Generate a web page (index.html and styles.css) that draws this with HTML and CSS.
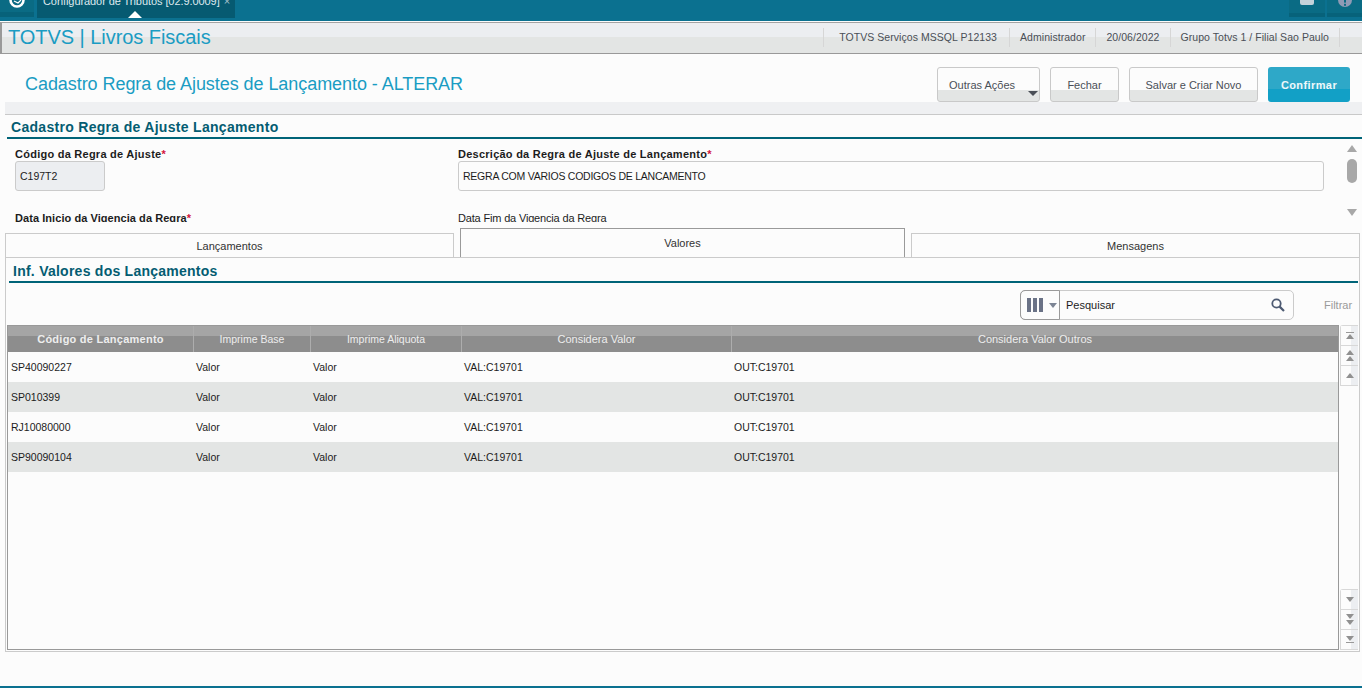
FILE: index.html
```html
<!DOCTYPE html>
<html lang="pt">
<head>
<meta charset="utf-8">
<title>TOTVS | Livros Fiscais</title>
<link rel="stylesheet" href="styles.css">
</head>
<body>
<div class="app">
  <header class="topbar">
    <div class="logo-cell">
      <svg class="logo" width="20" height="12" viewBox="0 0 20 12"><circle cx="10" cy="0" r="6.5" fill="none" stroke="#fff" stroke-width="2.6"/><path d="M7 1 L11 3 L14 0" fill="none" stroke="#fff" stroke-width="1.2"/></svg>
    </div>
    <div class="app-tab">
      <span class="app-tab-text">Configurador de Tributos [02.9.0009]</span>
      <span class="app-tab-x">×</span>
      <span class="app-tab-caret"></span>
    </div>
    <div class="top-spacer"></div>
    <div class="top-btn top-btn-first">
      <svg width="14" height="5" viewBox="0 0 14 5"><path d="M0 0h14v3a2 2 0 0 1-2 2H2a2 2 0 0 1-2-2z" fill="#c4d2da"/></svg>
    </div>
    <div class="top-btn">
      <svg width="14" height="7" viewBox="0 0 14 7"><path d="M0 0h14a7 7 0 0 1-14 0z" fill="#8f9ab5"/><rect x="6" y="0" width="2" height="2.6" fill="#0a6b84"/><rect x="6" y="3.8" width="2" height="2" fill="#0a6b84"/></svg>
    </div>
  </header>

  <div class="sysbar">
    <div class="sysbar-title">TOTVS | Livros Fiscais</div>
    <div class="sysbar-info">
      <span class="info-item">TOTVS Serviços MSSQL P12133</span>
      <span class="info-item">Administrador</span>
      <span class="info-item">20/06/2022</span>
      <span class="info-item">Grupo Totvs 1 / Filial Sao Paulo</span>
    </div>
  </div>

  <div class="page-head">
    <h1 class="page-title">Cadastro Regra de Ajustes de Lançamento - ALTERAR</h1>
    <div class="actions">
      <button class="btn btn-more">Outras Ações<span class="btn-caret"></span></button>
      <button class="btn btn-close">Fechar</button>
      <button class="btn btn-save">Salvar e Criar Novo</button>
      <button class="btn btn-primary">Confirmar</button>
    </div>
  </div>

  <section class="form-section">
    <h2 class="section-title">Cadastro Regra de Ajuste Lançamento</h2>
    <div class="form-body">
      <div class="form-fields">
        <div class="form-row">
          <div class="field field-code">
            <label class="label">Código da Regra de Ajuste<span class="req">*</span></label>
            <div class="input input-disabled">C197T2</div>
          </div>
          <div class="field field-desc">
            <label class="label">Descrição da Regra de Ajuste de Lançamento<span class="req">*</span></label>
            <div class="input input-desc">REGRA COM VARIOS CODIGOS DE LANCAMENTO</div>
          </div>
        </div>
        <div class="form-row form-row-second">
          <div class="field field-code">
            <label class="label label-tight">Data Inicio da Vigencia da Regra<span class="req">*</span></label>
          </div>
          <div class="field field-desc">
            <label class="label label-plain">Data Fim da Vigencia da Regra</label>
          </div>
        </div>
      </div>
      <div class="form-scroll">
        <span class="tri tri-up"></span>
        <span class="form-thumb"></span>
        <span class="tri tri-down"></span>
      </div>
    </div>
  </section>

  <nav class="tabs">
    <div class="tab">Lançamentos</div>
    <div class="tab tab-active">Valores</div>
    <div class="tab">Mensagens</div>
  </nav>

  <section class="panel">
    <h2 class="panel-title">Inf. Valores dos Lançamentos</h2>
    <div class="toolbar">
      <div class="search">
        <div class="search-cols">
          <svg width="16" height="14" viewBox="0 0 16 14"><path d="M0 0h4v14H0zM6 0h4v14H6zM12 0h4v14h-4z" fill="#6a7286"/></svg>
          <span class="search-caret"></span>
        </div>
        <div class="search-text">Pesquisar</div>
        <svg class="search-icon" width="14" height="14" viewBox="0 0 14 14"><circle cx="5.5" cy="5.5" r="4.2" fill="none" stroke="#4d5a72" stroke-width="1.8"/><path d="M8.6 8.6 13 13" stroke="#4d5a72" stroke-width="2.2"/></svg>
      </div>
      <span class="filter">Filtrar</span>
    </div>
    <div class="grid-wrap">
      <div class="grid">
        <div class="grid-row grid-head">
          <div class="th th-strong">Código de Lançamento</div>
          <div class="th th-small">Imprime Base</div>
          <div class="th th-small">Imprime Aliquota</div>
          <div class="th">Considera Valor</div>
          <div class="th">Considera Valor Outros</div>
        </div>
        <div class="grid-row"><div class="td">SP40090227</div><div class="td">Valor</div><div class="td">Valor</div><div class="td">VAL:C19701</div><div class="td">OUT:C19701</div></div>
        <div class="grid-row row-alt"><div class="td">SP010399</div><div class="td">Valor</div><div class="td">Valor</div><div class="td">VAL:C19701</div><div class="td">OUT:C19701</div></div>
        <div class="grid-row"><div class="td">RJ10080000</div><div class="td">Valor</div><div class="td">Valor</div><div class="td">VAL:C19701</div><div class="td">OUT:C19701</div></div>
        <div class="grid-row row-alt"><div class="td">SP90090104</div><div class="td">Valor</div><div class="td">Valor</div><div class="td">VAL:C19701</div><div class="td">OUT:C19701</div></div>
      </div>
      <div class="grid-scroll">
        <div class="sb-group">
          <div class="sb-btn"><span class="sb-line"></span><span class="mini mini-up"></span></div>
          <div class="sb-btn"><span class="mini mini-up"></span><span class="mini mini-up"></span></div>
          <div class="sb-btn"><span class="mini mini-up"></span></div>
        </div>
        <div class="sb-group">
          <div class="sb-btn"><span class="mini mini-down"></span></div>
          <div class="sb-btn"><span class="mini mini-down"></span><span class="mini mini-down"></span></div>
          <div class="sb-btn"><span class="mini mini-down"></span><span class="sb-line"></span></div>
        </div>
      </div>
    </div>
  </section>

  <footer class="bottom-line"></footer>
</div>
</body>
</html>
```
FILE: styles.css
```css
* { box-sizing: border-box; }
html, body { margin: 0; height: 100%; }
body {
  background: #fcfcfc;
  font-family: "Liberation Sans", Arial, sans-serif;
  font-size: 11px;
  color: #1c1c1c;
  overflow: hidden;
}
.app { width: 1362px; height: 688px; display: flex; flex-direction: column; }

/* top bar */
.topbar { height: 21px; background: #0b7190; display: flex; align-items: flex-start; flex: none; }
.logo-cell { width: 34px; height: 17px; background: #0a6b84; border-bottom: 5px solid #07627a; margin-right: 3px; overflow: hidden; }
.logo { display: block; margin-left: 7px; }
.app-tab { width: 198px; height: 18px; background: #065a71; color: #dfe9ee; position: relative; overflow: hidden; display: flex; padding-left: 6px; font-size: 11px; line-height: 11px; }
.app-tab-text { margin-top: -4px; white-space: nowrap; letter-spacing: -.07px; }
.app-tab-x { margin-top: -4px; margin-left: 4px; color: #a9c3cd; }
.app-tab-caret { position: absolute; left: 91px; bottom: 0; border: 7px solid transparent; border-top: 0; border-bottom-color: #fff; }
.top-spacer { flex: 1; }
.top-btn { width: 35px; height: 17px; background: #0a6b84; border-bottom: 4px solid #07627a; display: flex; justify-content: center; align-items: flex-start; }
.top-btn-first { width: 36px; margin-right: 2px; }

/* system bar */
.sysbar {
  height: 32px; flex: none; display: flex; justify-content: space-between; align-items: flex-start;
  border: 1px solid #999; border-left-width: 2px; border-right: 0; border-top-color: #a3a3a3;
  margin-top: 1px;
  background: linear-gradient(#eceef1 0, #eceef1 14px, #e3e5e4 14px, #e3e5e4 100%);
  padding: 1px 22px 0 6px;
}
.sysbar-title { font-size: 20px; line-height: 26px; color: #1a9cc3; letter-spacing: -.05px; }
.sysbar-info { display: flex; height: 19px; margin-top: 4px; align-items: center; border-left: 1px solid #d6d6d6; border-right: 1px solid #d6d6d6; }
.info-item { padding: 0 10px; font-size: 10.5px; letter-spacing: .05px; line-height: 19px; color: #4a4f57; border-left: 1px solid #d6d6d6; white-space: nowrap; }
.info-item:first-child { border-left: 0; padding: 0 12px 0 15px; }

/* page header */
.page-head {
  height: 61px; flex: none; margin-left: 5px; display: flex; justify-content: space-between; align-items: flex-start;
  padding: 13px 12px 0 20px; border-bottom: 1px solid #c9c9c9;
  background: linear-gradient(#fcfcfc 0, #fcfcfc 48px, #eff0f2 48px);
}
.page-title { margin: 6px 0 0; font-size: 18px; font-weight: 400; line-height: 22px; color: #1a9cc3; letter-spacing: -.06px; }
.actions { display: flex; gap: 10px; }
.btn {
  height: 35px; border: 1px solid #c9c9c9; border-radius: 3px; padding: 0; font: 400 11px "Liberation Sans", Arial, sans-serif;
  color: #4a4f57; background: linear-gradient(#fcfcfc 0, #fcfcfc 22px, #e3e5e4 22px); position: relative;
}
.btn-more { width: 103px; text-align: left; padding-left: 11px; }
.btn-close { width: 69px; }
.btn-save { width: 129px; }
.btn-primary { width: 82px; border: 0; color: #eef8fb; font-weight: 700; letter-spacing: .4px; background: linear-gradient(#2ea8c8 0, #2ea8c8 22px, #12a0c6 22px); }
.btn-caret { position: absolute; right: 1px; bottom: 5px; border: 5px solid transparent; border-bottom: 0; border-top: 5px solid #4a4f57; }

/* form */
.form-section { height: 119px; flex: none; padding-left: 7px; overflow: hidden; }
.section-title { margin: 0; height: 24px; border-bottom: 2px solid #006478; font-size: 14px; line-height: 24px; letter-spacing: .3px; color: #045c72; padding-left: 4px; }
.form-body { display: flex; height: 83px; overflow: hidden; }
.form-fields { flex: 1; padding-left: 8px; }
.form-row { display: flex; }
.form-row-second { margin-top: 12px; }
.field-code { width: 443px; }
.field-desc { width: 866px; }
.label { display: block; height: 14px; margin-top: 8px; font-weight: 700; font-size: 11px; line-height: 15px; letter-spacing: .25px; color: #1c1c1c; white-space: nowrap; }
.label-tight { letter-spacing: .06px; }
.label-plain { font-weight: 400; letter-spacing: -.17px; }
.req { color: #d3143c; }
.input { height: 30px; border: 1px solid #cbcbcb; border-radius: 3px; line-height: 28px; padding-left: 4px; background: #fcfcfc; font-size: 10.5px; }
.input-desc { letter-spacing: -.24px; }
.field-code .input { width: 90px; }
.input-disabled { background: #eceef1; }
.form-scroll { width: 24px; margin-right: -2px; display: flex; flex-direction: column; align-items: center; padding-top: 6px; height: 81px; flex: none; }
.tri { display: block; border: 5px solid transparent; }
.tri-up { border-top: 0; border-bottom: 7px solid #a8a8a8; }
.tri-down { border-bottom: 0; border-top: 7px solid #a8a8a8; margin-top: 26px; }
.form-thumb { width: 10px; height: 24px; border-radius: 5px; background: #a8a8a8; margin-top: 7px; }

/* tabs */
.tabs { height: 31px; margin-top: -7px; flex: none; display: flex; gap: 6px; align-items: flex-end; padding-left: 5px; position: relative; }
.tab { width: 449px; height: 25px; border: 1px solid #cbcbcb; border-bottom: 0; text-align: center; line-height: 25px; font-size: 11px; color: #333; background: #fcfcfc; }
.tab-active { width: 445px; height: 30px; border-color: #9a9a9a; line-height: 29px; }

/* panel */
.panel { height: 395px; flex: none; margin: -1px 2px 0 5px; border: 1px solid #cbcbcb; padding: 0 1px; background: #fcfcfc; position: relative; display: flex; flex-direction: column; }
.panel-title { margin: 0 0 0 2px; height: 25px; border-bottom: 2px solid #006478; font-size: 14px; line-height: 26px; letter-spacing: .25px; color: #045c72; padding-left: 4px; flex: none; }
.toolbar { height: 42px; flex: none; display: flex; justify-content: flex-end; align-items: flex-start; padding: 7px 7px 0 0; }
.search { width: 274px; height: 30px; border: 1px solid #cbcbcb; border-radius: 5px; display: flex; align-items: center; }
.search-cols { width: 40px; height: 30px; margin: -1px 0 -1px -1px; border: 1px solid #9a9a9a; border-radius: 5px 0 0 5px; display: flex; align-items: center; padding-left: 6px; gap: 6px; flex: none; }
.search-caret { border: 4.5px solid transparent; border-bottom: 0; border-top: 5px solid #7c8494; }
.search-text { flex: 1; padding-left: 6px; font-size: 11px; color: #1c1c1c; }
.search-icon { margin-right: 8px; }
.filter { margin-left: 30px; width: 27px; line-height: 30px; color: #9a9a9a; font-size: 11px; }
.grid-wrap { flex: 1; display: flex; margin-bottom: 1px; }
.grid { width: 1332px; border: 1px solid #999; background: #fcfcfc; }
.grid-row { display: grid; grid-template-columns: 185px 117px 151px 270px 1fr; height: 30px; align-items: center; }
.row-alt { background: #e3e5e4; }
.grid-head { height: 26px; background: linear-gradient(#a5a5a5 0, #a5a5a5 10px, #8d8d8d 10px); align-items: stretch; }
.th { color: #eeeeee; text-align: center; font-size: 11px; line-height: 26px; }
.th + .th { border-left: 1px solid #adadad; }
.th-strong { font-weight: 700; letter-spacing: .25px; }
.th-small { font-size: 10.5px; }
.td { padding-left: 3px; font-size: 10.5px; color: #1c1c1c; }
.grid-scroll { width: 18px; margin-left: 1px; display: flex; flex-direction: column; justify-content: space-between; }
.sb-group { display: flex; flex-direction: column; border-left: 1px solid #d8d8d8; border-radius: 3px 0 0 0; border-top: 1px solid #d8d8d8; }
.sb-btn { height: 20px; border-bottom: 1px solid #d8d8d8; background: linear-gradient(90deg, #fcfcfc 0, #fcfcfc 60%, #eceef1 60%); display: flex; flex-direction: column; align-items: center; justify-content: center; gap: 1px; }
.sb-line { width: 8px; height: 1px; background: #999; }
.mini { display: block; border: 4px solid transparent; }
.mini-up { border-top: 0; border-bottom: 5px solid #909090; }
.mini-down { border-bottom: 0; border-top: 5px solid #909090; }

/* footer */
.bottom-line { margin-top: auto; height: 2px; background: #0b7190; flex: none; }
```
